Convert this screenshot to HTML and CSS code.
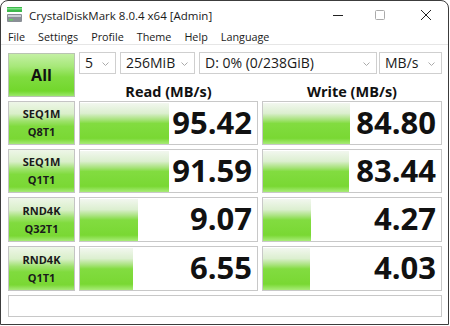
FILE: index.html
```html
<!DOCTYPE html>
<html>
<head>
<meta charset="utf-8">
<link rel="stylesheet" href="styles.css">
</head>
<body>
<div class="window">
  <div class="titlebar">
    <svg class="appicon" width="16" height="16" viewBox="0 0 16 16">
      <rect x="0" y="0" width="15" height="5" fill="#3cb84a"/>
      <rect x="0" y="1" width="15" height="1.5" fill="#7fe08a"/>
      <rect x="0" y="7" width="15" height="8" rx="1" fill="#8a8f96"/>
      <rect x="1" y="8" width="13" height="2" fill="#c9cdd2"/>
      <rect x="2" y="12" width="4" height="1.5" fill="#5fd25f"/>
    </svg>
    <span class="title">CrystalDiskMark 8.0.4 x64 [Admin]</span>
    <div class="winbtns">
      <svg class="wb" width="46" height="28" viewBox="0 0 46 28"><line x1="18" y1="14.5" x2="28" y2="14.5" stroke="#222" stroke-width="1"/></svg>
      <svg class="wb" width="46" height="28" viewBox="0 0 46 28"><rect x="18.5" y="9.5" width="9" height="9" rx="1" fill="none" stroke="#aaa" stroke-width="1"/></svg>
      <svg class="wb" width="46" height="28" viewBox="0 0 46 28"><path d="M18 9 L28 19 M28 9 L18 19" stroke="#222" stroke-width="1"/></svg>
    </div>
  </div>
  <div class="menubar">
    <span class="mi">File</span>
    <span class="mi">Settings</span>
    <span class="mi">Profile</span>
    <span class="mi">Theme</span>
    <span class="mi">Help</span>
    <span class="mi">Language</span>
  </div>
  <div class="main">
    <div class="allbtn">All</div>
    <div class="topright">
      <div class="selects">
        <div class="sel w1"><span>5</span><svg class="chev" width="7" height="4" viewBox="0 0 7 4"><polyline points="0.5,0.5 3.5,3.5 6.5,0.5" fill="none" stroke="#aaa" stroke-width="1"/></svg></div>
        <div class="sel w2"><span>256MiB</span><svg class="chev" width="7" height="4" viewBox="0 0 7 4"><polyline points="0.5,0.5 3.5,3.5 6.5,0.5" fill="none" stroke="#aaa" stroke-width="1"/></svg></div>
        <div class="sel w3"><span>D: 0% (0/238GiB)</span><svg class="chev" width="7" height="4" viewBox="0 0 7 4"><polyline points="0.5,0.5 3.5,3.5 6.5,0.5" fill="none" stroke="#aaa" stroke-width="1"/></svg></div>
        <div class="sel w4"><span>MB/s</span><svg class="chev" width="7" height="4" viewBox="0 0 7 4"><polyline points="0.5,0.5 3.5,3.5 6.5,0.5" fill="none" stroke="#aaa" stroke-width="1"/></svg></div>
      </div>
      <div class="heads">
        <div class="head">Read (MB/s)</div>
        <div class="head">Write (MB/s)</div>
      </div>
    </div>

    <div class="label"><span>SEQ1M</span><span>Q8T1</span></div>
    <div class="cell"><div class="bar" style="width:50%"></div><span class="num">95.42</span></div>
    <div class="cell"><div class="bar" style="width:49%"></div><span class="num">84.80</span></div>

    <div class="label"><span>SEQ1M</span><span>Q1T1</span></div>
    <div class="cell"><div class="bar" style="width:50%"></div><span class="num">91.59</span></div>
    <div class="cell"><div class="bar" style="width:48.5%"></div><span class="num">83.44</span></div>

    <div class="label"><span>RND4K</span><span>Q32T1</span></div>
    <div class="cell"><div class="bar" style="width:33%"></div><span class="num">9.07</span></div>
    <div class="cell"><div class="bar" style="width:27%"></div><span class="num">4.27</span></div>

    <div class="label"><span>RND4K</span><span>Q1T1</span></div>
    <div class="cell"><div class="bar" style="width:30%"></div><span class="num">6.55</span></div>
    <div class="cell"><div class="bar" style="width:26.5%"></div><span class="num">4.03</span></div>

    <div class="status"></div>
  </div>
</div>
</body>
</html>
```
FILE: styles.css
```css
* { box-sizing: border-box; }
html, body { margin: 0; padding: 0; background: #ffffff; }
body { font-family: "Open Sans", "Noto Sans", sans-serif; color: #1a1a1a; }

.window {
  width: 449px;
  height: 325px;
  border: 1px solid #3c3c3c;
  border-radius: 8px 8px 0 0;
  background: #ffffff;
  overflow: hidden;
}

.titlebar {
  height: 27px;
  display: flex;
  align-items: center;
  padding-left: 6px;
}
.appicon { display: block; margin-top: 1px; }
.title {
  margin-left: 6px;
  margin-top: 2px;
  font-size: 11.5px;
  color: #1a1a1a;
}
.winbtns {
  margin-left: auto;
  display: flex;
  align-self: flex-start;
  margin-right: -1px;
}
.wb { display: block; }
.winbtns .wb:first-child { margin-right: -4px; }

.menubar {
  height: 17px;
  display: flex;
  align-items: center;
  padding-left: 7px;
  padding-top: 1px;
  gap: 13px;
  font-size: 10.8px;
  border-bottom: 1px solid #e6e6e6;
}

.main {
  padding: 7px 0 0 7px;
  display: grid;
  grid-template-columns: 67px 179px 180px;
  grid-template-rows: 45px 44px 44px 45px 45px 22px;
  column-gap: 4px;
  row-gap: 4px;
}
.main > .topright { margin-bottom: 1px; }

.allbtn {
  margin-top: 1px;
  height: 44px;
  border: 1px solid #b9c4b2;
  background: linear-gradient(#c4f0a4 0%, #a6e878 30%, #80dc40 55%, #72d72c 88%, #9be86a 100%);
  display: flex;
  align-items: center;
  justify-content: center;
  font-weight: 700;
  font-size: 16px;
  color: #111;
}

.topright {
  grid-column: 2 / 4;
  display: flex;
  flex-direction: column;
}
.selects {
  display: flex;
  height: 22px;
  gap: 4px;
}
.sel {
  height: 22px;
  border: 1px solid #cfcfcf;
  background: #fff;
  display: flex;
  align-items: center;
  padding: 0 6px 0 5px;
  font-size: 14px;
  color: #1a1a1a;
}
.sel span { flex: 1; line-height: 20px; }
.chev { display: block; margin-top: 1px; }
.w1 { width: 37px; }
.w2 { width: 75px; }
.w3 { width: 178px; }
.w4 { width: 63px; margin-left: -2px; }

.heads {
  flex: 1;
  display: grid;
  grid-template-columns: 179px 180px;
  column-gap: 4px;
}
.head {
  display: flex;
  align-items: center;
  justify-content: center;
  font-weight: 700;
  font-size: 14.5px;
  padding-top: 8px;
  color: #111;
}

.label {
  border: 1px solid #c4c4c4;
  background: linear-gradient(#eef6e8 0%, #d9efc9 28%, #9fe26e 45%, #80db3e 58%, #7ad834 88%, #a6ea78 100%);
  display: flex;
  flex-direction: column;
  align-items: center;
  justify-content: center;
  font-weight: 700;
  font-size: 11px;
  line-height: 18px;
  color: #1a1a1a;
}

.cell {
  position: relative;
  border: 1px solid #c8c8c8;
  background: #fff;
  display: flex;
  align-items: center;
  justify-content: flex-end;
  padding: 0 5px 0 0;
}
.bar {
  position: absolute;
  left: 0;
  top: 1px;
  bottom: 0;
  background: linear-gradient(#f2f7ef 0%, #dcefd0 25%, #a9e37e 40%, #82dc40 50%, #79d833 86%, #a8ec78 100%);
}
.num {
  position: relative;
  font-weight: 700;
  font-size: 31px;
  line-height: 1;
  color: #111;
  padding-bottom: 2px;
}

.status {
  grid-column: 1 / 4;
  border: 1px solid #c8c8c8;
  background: #fff;
}
```
